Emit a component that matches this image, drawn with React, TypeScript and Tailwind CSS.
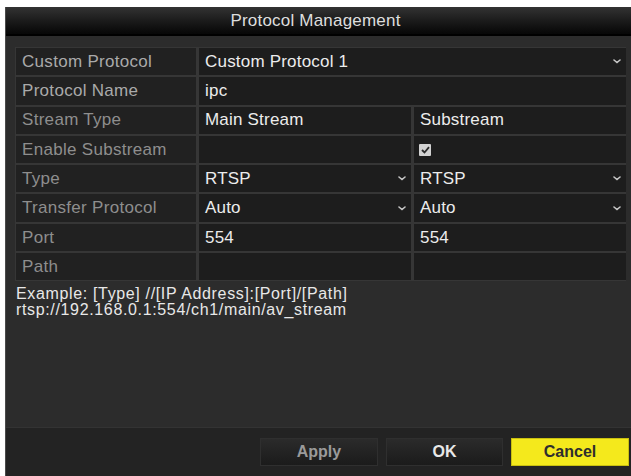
import React from "react";

const Chevron: React.FC = () => (
  <svg width="8" height="5" viewBox="0 0 8 5" className="shrink-0">
    <path d="M1 1 L4 3.5 L7 1" stroke="#c8c8c8" strokeWidth="1.6" fill="none" strokeLinecap="round" />
  </svg>
);

const Label: React.FC<{ text: string; dim?: boolean }> = ({ text, dim }) => (
  <div
    className={`flex items-center bg-[#212121] pl-[6px] text-[17px] tracking-[0.3px] ${
      dim ? "text-[#8e8e8e]" : "text-[#aaaaaa]"
    }`}
  >
    {text}
  </div>
);

const Value: React.FC<{ text?: string; select?: boolean; span?: boolean }> = ({ text, select, span }) => (
  <div
    className={`flex items-center justify-between bg-[#1d1d1d] pl-[6px] pr-[5px] text-[17px] tracking-[0.2px] text-[#ececec] ${
      span ? "col-span-2" : ""
    }`}
  >
    <span>{text}</span>
    {select && <Chevron />}
  </div>
);

const Checkbox: React.FC = () => (
  <div className="absolute left-[5px] top-1/2 -translate-y-1/2 flex h-[12px] w-[12px] items-center justify-center rounded-[1px] bg-[#d2d2d2]">
    <svg width="9" height="8" viewBox="0 0 9 8">
      <path d="M1 4 L3.5 6.5 L8 1.2" stroke="#2a2a2a" strokeWidth="1.8" fill="none" />
    </svg>
  </div>
);

export default function App() {
  return (
    <div
      className="h-[476px] w-[631px] bg-white pl-[5px] pt-[7px]"
      style={{ fontFamily: '"Liberation Sans", Arial, sans-serif' }}
    >
      <div className="flex h-[469px] w-[626px] flex-col border-l border-[#4a4a4a] bg-[#2c2c2c]">
        {/* title bar */}
        <div className="flex h-[29px] items-center justify-center border-b-2 border-black bg-gradient-to-b from-[#333333] to-[#070707] pr-[6px] text-[17px] tracking-[0.2px] text-[#dedede]">
          Protocol Management
        </div>

        {/* table */}
        <div className="ml-[9px] mt-[11px] grid w-[611px] grid-cols-[180px_212px_212px] auto-rows-[27.3px] gap-x-[3px] gap-y-[2px] bg-[#363636] p-px">
          <Label text="Custom Protocol" />
          <Value text="Custom Protocol 1" select span />

          <Label text="Protocol Name" />
          <Value text="ipc" span />

          <Label text="Stream Type" dim />
          <Value text="Main Stream" />
          <Value text="Substream" />

          <Label text="Enable Substream" dim />
          <Value />
          <div className="relative bg-[#1d1d1d]">
            <Checkbox />
          </div>

          <Label text="Type" dim />
          <Value text="RTSP" select />
          <Value text="RTSP" select />

          <Label text="Transfer Protocol" dim />
          <Value text="Auto" select />
          <Value text="Auto" select />

          <Label text="Port" dim />
          <Value text="554" />
          <Value text="554" />

          <Label text="Path" dim />
          <Value />
          <Value />
        </div>

        {/* example */}
        <div className="ml-[10px] mt-[5px] text-[16px] leading-[16px] tracking-[0.65px] text-[#e8e8e8]">
          <div>Example: [Type] //[IP Address]:[Port]/[Path]</div>
          <div>rtsp://192.168.0.1:554/ch1/main/av_stream</div>
        </div>

        <div className="flex-1" />

        {/* footer */}
        <div className="flex h-[49px] items-center justify-end gap-[8px] border-t border-[#333333] bg-[#232323] pr-[2px] text-[16px] font-bold">
          <button className="h-[28px] w-[118px] border border-[#2f2f2f] bg-gradient-to-b from-[#2b2b2b] to-[#1b1b1b] text-[#9a9a9a]">
            Apply
          </button>
          <button className="h-[28px] w-[117px] border border-[#2f2f2f] bg-gradient-to-b from-[#2b2b2b] to-[#1b1b1b] text-[#e8e8e8]">
            OK
          </button>
          <button className="h-[28px] w-[118px] border border-[#c9bf10] bg-[#f4e91c] text-[#2e2e2e]">
            Cancel
          </button>
        </div>
      </div>
    </div>
  );
}
